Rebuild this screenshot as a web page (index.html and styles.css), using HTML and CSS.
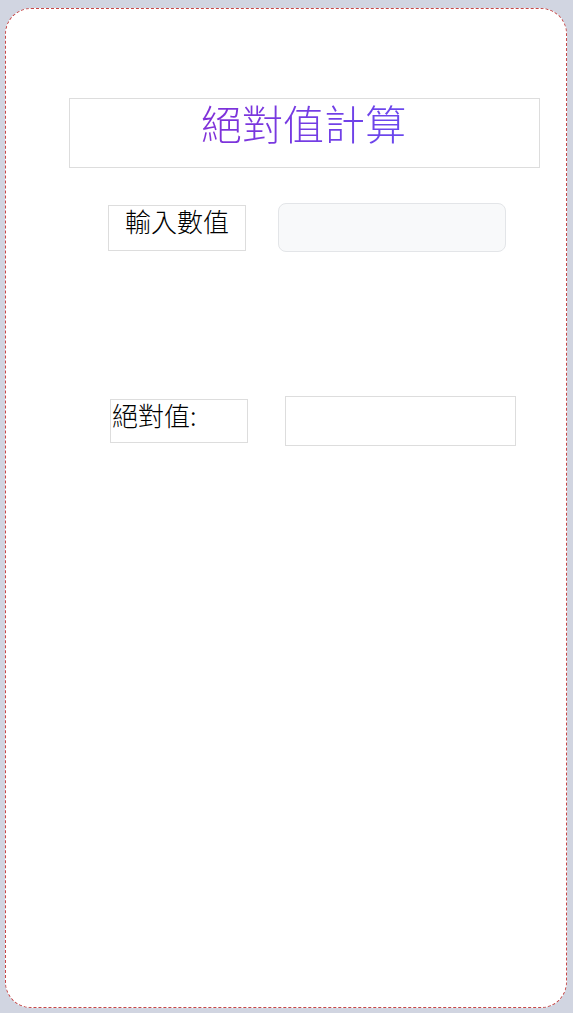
FILE: index.html
```html
<!DOCTYPE html>
<html lang="zh-Hant">
<head>
    <meta charset="UTF-8">
    <meta name="viewport" content="width=device-width, initial-scale=1.0">
    <title>絕對值計算</title>
    <link rel="stylesheet" href="styles.css">
</head>
<body>
<div class="card">
    <div class="titleBox">
        <h1 class="title">絕對值計算</h1>
    </div>

    <div class="inputRow">
        <label class="inputLabel" for="num">輸入數值</label>
        <input type="number" id="num" class="numInput">
    </div>

    <div class="resultRow">
        <div class="resultLabel">絕對值:</div>
        <div class="resultBox" id="result"></div>
    </div>
</div>
</body>
</html>
```

FILE: styles.css
```css
body {
    margin: 0;
    padding: 8px 6px 5px 5px;
    background-color: #d1d5e1;
    font-family: "Noto Sans CJK TC", "Noto Sans", sans-serif;
}

.card {
    box-sizing: border-box;
    height: 1000px;
    background-color: white;
    border: 1px dashed #c84848;
    border-radius: 26px;
    padding-top: 89px;
}

.titleBox {
    box-sizing: border-box;
    margin-left: 63px;
    width: 471px;
    height: 70px;
    border: 1px solid #dddddd;
    display: flex;
    align-items: center;
    justify-content: center;
}

.title {
    margin: 0 0 0 -2px;
    font-size: 41px;
    font-weight: 300;
    line-height: 1;
    padding-bottom: 22px;
    background: linear-gradient(90deg, #8030d8, #6a48ee);
    -webkit-background-clip: text;
    background-clip: text;
    color: transparent;
}

.inputRow {
    display: flex;
    align-items: center;
    margin-top: 35px;
    margin-left: 102px;
}

.inputLabel {
    box-sizing: border-box;
    width: 138px;
    height: 46px;
    border: 1px solid #dddddd;
    font-size: 26px;
    font-weight: 300;
    line-height: 30px;
    text-align: center;
    color: black;
}

.numInput {
    box-sizing: border-box;
    margin: 0 0 0 32px;
    width: 228px;
    height: 49px;
    background-color: #f8f9fa;
    border: 1px solid #e3e5e8;
    border-radius: 8px;
    font-size: 20px;
    padding: 0 10px;
}

.resultRow {
    display: flex;
    align-items: center;
    margin-top: 144px;
    margin-left: 104px;
}

.resultLabel {
    box-sizing: border-box;
    width: 138px;
    height: 44px;
    border: 1px solid #dddddd;
    font-size: 26px;
    font-weight: 300;
    line-height: 30px;
    padding-left: 1px;
    color: black;
}

.resultBox {
    box-sizing: border-box;
    margin-left: 37px;
    width: 231px;
    height: 50px;
    border: 1px solid #dddddd;
}
```
